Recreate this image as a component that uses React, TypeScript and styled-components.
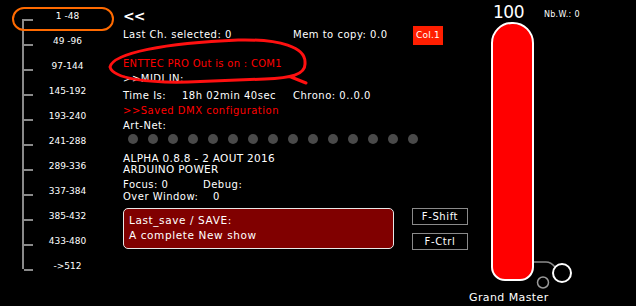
import React from "react";
import styled, { createGlobalStyle } from "styled-components";

const GlobalStyle = createGlobalStyle`
    html, body {
        margin: 0;
        padding: 0;
        background: #000;
    }
    body {
        font-family: "DejaVu Sans", "Liberation Sans", sans-serif;
        color: #fff;
    }
`;

// channel ranges shown on the left rail
const ranges = [
    "1 -48",
    "49 -96",
    "97-144",
    "145-192",
    "193-240",
    "241-288",
    "289-336",
    "337-384",
    "385-432",
    "433-480",
    "->512",
];

const Screen = styled.div`
    position: relative;
    display: flex;
    width: 636px;
    height: 306px;
    overflow: hidden;
    background: #000;
`;

const Sidebar = styled.div`
    width: 123px;
    padding-left: 22px;
    box-sizing: border-box;
`;

const Rail = styled.div`
    display: flex;
    flex-direction: column;
    margin-top: 19px;
    width: 78px;
    border-left: 2px solid #8a8a8a;
    height: 250px;
`;

const Stop = styled.div<{ $last?: boolean; $selected?: boolean }>`
    position: relative;
    display: flex;
    align-items: flex-start;
    height: ${(p) => (p.$last ? "0" : "25px")};
    flex-shrink: 0;

    &::after {
        content: "";
        display: ${(p) => (p.$selected ? "block" : "none")};
        position: absolute;
        left: -12px;
        top: -12px;
        width: 98px;
        height: 20px;
        border: 2px solid #ff6a00;
        border-radius: 12px;
    }
`;

const Tick = styled.span`
    flex: none;
    width: 9px;
    height: 2px;
    background: #8a8a8a;
`;

const RangeLabel = styled.span`
    flex: 1;
    margin-top: -10px;
    line-height: 14px;
    font-size: 9px;
    text-align: center;
    color: #fff;
`;

const Main = styled.div`
    width: 346px;
    padding-top: 7px;
    display: flex;
    flex-direction: column;
`;

const Back = styled.div`
    line-height: 18px;
    height: 18px;
    font-size: 14px;
    font-weight: bold;
    letter-spacing: -1px;
`;

const Line = styled.div<{ $lh?: number; $mt?: number; $color?: string; $size?: number; $ls?: number }>`
    line-height: ${(p) => p.$lh ?? 15}px;
    height: ${(p) => p.$lh ?? 15}px;
    margin-top: ${(p) => p.$mt ?? 0}px;
    font-size: ${(p) => p.$size ?? 10}px;
    color: ${(p) => p.$color ?? "#fff"};
    letter-spacing: ${(p) => p.$ls ?? 0.5}px;
    white-space: nowrap;
`;

const Cols = styled.div<{ $cols: string; $lh?: number; $mt?: number }>`
    display: grid;
    grid-template-columns: ${(p) => p.$cols};
    align-items: center;
    line-height: ${(p) => p.$lh ?? 15}px;
    height: ${(p) => p.$lh ?? 15}px;
    margin-top: ${(p) => p.$mt ?? 0}px;
    font-size: 10px;
    letter-spacing: 0.5px;
    white-space: nowrap;
`;

const ColBadge = styled.span`
    justify-self: start;
    width: 30px;
    height: 19px;
    line-height: 19px;
    text-align: center;
    background: #ff1e00;
    color: #fff;
    font-size: 9px;
    letter-spacing: 0.2px;
`;

const Dots = styled.div`
    display: flex;
    gap: 10px;
    padding-left: 5px;
    margin-top: 1px;
`;

const Dot = styled.span`
    width: 10px;
    height: 10px;
    border-radius: 50%;
    background: #4a4a4a;
`;

const Bottom = styled.div`
    display: flex;
    gap: 18px;
    margin-top: 6px;
`;

const SaveBox = styled.div`
    width: 271px;
    height: 41px;
    box-sizing: border-box;
    padding: 4px 0 0 5px;
    background: #800000;
    border: 1px solid #e8e8e8;
    border-radius: 5px;
    font-size: 10.5px;
    line-height: 15px;
    letter-spacing: 0.6px;
`;

const Keys = styled.div`
    display: flex;
    flex-direction: column;
    gap: 8px;
`;

const Key = styled.div`
    width: 56px;
    height: 17px;
    box-sizing: border-box;
    border: 1px solid #8a8a8a;
    text-align: center;
    line-height: 15px;
    font-size: 10px;
    letter-spacing: 0.6px;
`;

const Master = styled.div`
    flex: 1;
    display: flex;
    flex-direction: column;
`;

const MasterTop = styled.div`
    display: flex;
    align-items: flex-end;
    height: 22px;
    padding-left: 24px;
`;

const Level = styled.span`
    font-size: 17px;
    line-height: 20px;
    letter-spacing: -0.5px;
`;

const Windows = styled.span`
    font-size: 8px;
    line-height: 10px;
    margin-left: 20px;
    margin-bottom: 2px;
    letter-spacing: 0.3px;
`;

const BarRow = styled.div`
    display: flex;
    align-items: flex-end;
    height: 268px;
    padding-left: 22px;
`;

const Fader = styled.div`
    align-self: flex-start;
    width: 43px;
    height: 259px;
    box-sizing: border-box;
    background: #ff0000;
    border: 2px solid #fff;
    border-radius: 21px 21px 14px 14px;
`;

const MasterLabel = styled.div`
    font-size: 11px;
    line-height: 16px;
    letter-spacing: 0.4px;
    white-space: nowrap;
`;

const Scribble = styled.svg`
    position: absolute;
    left: 105px;
    top: 35px;
    pointer-events: none;
`;

export default function App() {
    return (
        <>
            <GlobalStyle />
            <Screen>
                <Sidebar>
                    <Rail>
                        {ranges.map((r, i) => (
                            <Stop key={r} $selected={i === 0} $last={i === ranges.length - 1}>
                                <Tick />
                                <RangeLabel>{r}</RangeLabel>
                            </Stop>
                        ))}
                    </Rail>
                </Sidebar>

                <Main>
                    <Back>&lt;&lt;</Back>
                    <Cols $cols="170px 120px auto" $lh={20}>
                        <span>Last Ch. selected: 0</span>
                        <span>Mem to copy: 0.0</span>
                        <ColBadge>Col.1</ColBadge>
                    </Cols>
                    <Line $mt={11} $color="#ff0000" $ls={0.3}>ENTTEC PRO Out is on : COM1</Line>
                    <Line>&gt;&gt;MIDI IN:</Line>
                    <Cols $cols="59px 111px auto" $mt={2}>
                        <span>Time Is:</span>
                        <span>18h 02min 40sec</span>
                        <span>Chrono: 0..0.0</span>
                    </Cols>
                    <Line $color="#ff0000">&gt;&gt;Saved DMX configuration</Line>
                    <Line>Art-Net:</Line>
                    <Dots>
                        {Array.from({ length: 15 }).map((_, i) => (
                            <Dot key={i} />
                        ))}
                    </Dots>
                    <Line $mt={8} $lh={12} $size={10.5} $ls={0.3}>ALPHA 0.8.8 - 2 AOUT 2016</Line>
                    <Line $lh={11} $size={10.5} $ls={0.3}>ARDUINO POWER</Line>
                    <Cols $cols="80px auto" $mt={4} $lh={12}>
                        <span>Focus: 0</span>
                        <span>Debug:</span>
                    </Cols>
                    <Cols $cols="90px auto" $lh={11}>
                        <span>Over Window:</span>
                        <span>0</span>
                    </Cols>
                    <Bottom>
                        <SaveBox>
                            <div>Last_save / SAVE:</div>
                            <div>A complete New show</div>
                        </SaveBox>
                        <Keys>
                            <Key>F-Shift</Key>
                            <Key>F-Ctrl</Key>
                        </Keys>
                    </Bottom>
                </Main>

                <Master>
                    <MasterTop>
                        <Level>100</Level>
                        <Windows>Nb.W.: 0</Windows>
                    </MasterTop>
                    <BarRow>
                        <Fader />
                        <svg width="40" height="33" viewBox="0 0 40 33">
                            <path d="M0 5 L12 5 Q17 5 21 10" fill="none" stroke="#8a8a8a" strokeWidth="1.5" />
                            <circle cx="28" cy="16" r="9" fill="none" stroke="#fff" strokeWidth="2" />
                            <circle cx="9" cy="25.5" r="5.5" fill="none" stroke="#9a9a9a" strokeWidth="1.5" />
                        </svg>
                    </BarRow>
                    <MasterLabel>Grand Master</MasterLabel>
                </Master>

                {/* hand drawn red ring around the ENTTEC status */}
                <Scribble width="210" height="55" viewBox="0 0 210 55">
                    <path
                        d="M5 32 C8 18 60 8 133 5 C175 4 201 12 200 28 C201 40 185 43 160 44 L83 47 C45 48 8 44 5 32 Z M186 42 L201 48"
                        fill="none"
                        stroke="#ff1010"
                        strokeWidth="3"
                        strokeLinecap="round"
                    />
                </Scribble>
            </Screen>
        </>
    );
}
